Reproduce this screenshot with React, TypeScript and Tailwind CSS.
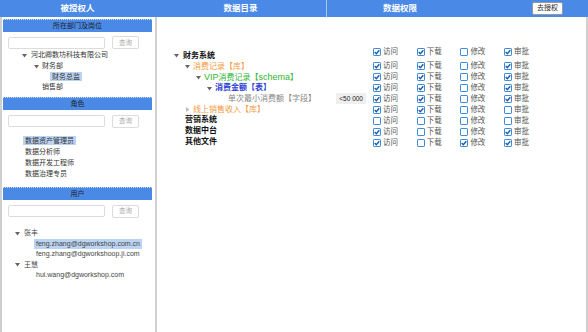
import React from "react";

const FONT = "font-['Liberation_Sans','Noto_Sans_CJK_SC',sans-serif]";

function Arrow({ open = true, light = false }: { open?: boolean; light?: boolean }) {
  return (
    <svg width="5" height="5" viewBox="0 0 10 10" className="shrink-0">
      {open ? (
        <path d="M0 2 L10 2 L5 9 Z" fill={light ? "#bbb" : "#666"} />
      ) : (
        <path d="M2 0 L9 5 L2 10 Z" fill="#bbb" />
      )}
    </svg>
  );
}

function Box({ checked }: { checked: boolean }) {
  return (
    <svg width="8" height="8" viewBox="0 0 8 8" className="shrink-0">
      <rect x="0.5" y="0.5" width="7" height="7" rx="0.6" fill="white" stroke="#3d8bd9" />
      {checked && (
        <path d="M1.7 4.1 L3.3 5.7 L6.3 2.2" fill="none" stroke="#1b5aa6" strokeWidth="1.4" />
      )}
    </svg>
  );
}

function SubHeader({ title }: { title: string }) {
  return (
    <div className="ml-[1px] mr-[3px] h-[13px] bg-[#4a89e6] border-t border-dotted border-[#c9dbf5] flex items-center justify-center text-[7px] text-[#222]">
      {title}
    </div>
  );
}

function Search({ className = "" }: { className?: string }) {
  return (
    <div className={`flex items-center gap-[7px] pl-[6px] ${className}`}>
      <div className="w-[97px] h-[12px] border border-[#dcdcdc] rounded-[2px] bg-white" />
      <div className="w-[27px] h-[13px] border border-[#dcdcdc] rounded-[2px] text-[6.5px] text-[#aaa] flex items-center justify-center">
        查询
      </div>
    </div>
  );
}

const perms: boolean[][] = [
  [true, true, false, true],
  [true, true, false, true],
  [true, true, false, true],
  [true, true, false, true],
  [true, true, false, true],
  [true, true, false, false],
  [false, false, false, false],
  [true, false, false, true],
  [true, false, true, true],
];
const permLabels = ["访问", "下载", "修改", "审批"];

export default function App() {
  return (
    <div className={`${FONT} w-[588px] h-[332px] bg-white overflow-hidden flex flex-col`}>
      {/* Header */}
      <div className="flex h-[17px] bg-[#4a89e6] text-white font-bold text-[8.5px] shrink-0">
        <div className="w-[155px] flex items-center justify-center">被授权人</div>
        <div className="w-[172px] flex items-center justify-center border-r border-[#a9c6f1]">数据目录</div>
        <div className="flex-1 flex items-center pl-[56px]">
          <span>数据权限</span>
          <div className="ml-auto mr-[25px] h-[13px] px-[4px] bg-white border border-[#999] rounded-[2px] text-[#222] font-normal text-[7px] flex items-center">
            去授权
          </div>
        </div>
      </div>

      <div className="flex flex-1">
        {/* Left panel */}
        <div className="w-[157px] border-l-2 border-r-2 border-[#cfcfcf] pt-[2px] text-[7px] text-[#333]">
          <SubHeader title="所在部门及岗位" />
          <Search className="mt-[4px]" />
          <div className="mt-[1px]">
            <div className="h-[10.7px] flex items-center pl-[20px] gap-[4px]">
              <Arrow />
              <span>河北卿数坊科技有限公司</span>
            </div>
            <div className="h-[10.7px] flex items-center pl-[32px] gap-[3px]">
              <Arrow />
              <span>财务部</span>
            </div>
            <div className="h-[10.7px] flex items-center pl-[48px]">
              <span className="bg-[#bcd4f4] px-[2px] leading-[9px]">财务总监</span>
            </div>
            <div className="h-[10.7px] flex items-center pl-[40px]">销售部</div>
          </div>

          <div className="mt-[4px]">
            <SubHeader title="角色" />
          </div>
          <Search className="mt-[5px]" />
          <div className="mt-[7.5px] pl-[21px]">
            {["数据资产管理员", "数据分析师", "数据开发工程师", "数据治理专员"].map((r, i) => (
              <div key={r} className="h-[11px] flex items-center">
                <span className={`px-[2px] leading-[9px] ${i === 0 ? "bg-[#bcd4f4]" : ""}`}>{r}</span>
              </div>
            ))}
          </div>

          <div className="mt-[7.5px]">
            <SubHeader title="用户" />
          </div>
          <Search className="mt-[5px]" />
          <div className="mt-[10px] text-[7px] text-[#444]">
            <div className="h-[10.6px] flex items-center pl-[13px] gap-[4px]">
              <Arrow />
              <span>张丰</span>
            </div>
            <div className="h-[10.6px] flex items-center pl-[32px]">
              <span className="bg-[#bcd4f4] px-[2px] leading-[10px]">feng.zhang@dgworkshop.com.cn</span>
            </div>
            <div className="h-[10.6px] flex items-center pl-[34px]">feng.zhang@dgworkshoop.ji.com</div>
            <div className="h-[10.6px] flex items-center pl-[13px] gap-[4px]">
              <Arrow />
              <span>王慧</span>
            </div>
            <div className="h-[10.6px] flex items-center pl-[34px]">hui.wang@dgworkshop.com</div>
          </div>
        </div>

        {/* Catalog + permissions */}
        <div className="flex-1 flex border-r-2 border-[#cfcfcf]">
          <div className="w-[213px] pt-[33.5px] text-[8px]">
            <div className="h-[10.75px] flex items-center pl-[17px] gap-[4px] font-bold text-[#111]">
              <Arrow />
              <span>财务系统</span>
            </div>
            <div className="h-[10.75px] flex items-center pl-[28px] gap-[3px] text-[#f39a3d]">
              <Arrow />
              <span>消费记录【库】</span>
            </div>
            <div className="h-[10.75px] flex items-center pl-[39px] gap-[3px] text-[#2fb52f]">
              <Arrow />
              <span>
                <span className="text-[9px]">VIP</span>消费记录【<span className="text-[9px]">schema</span>】
              </span>
            </div>
            <div className="h-[10.75px] flex items-center pl-[50px] gap-[3px] text-[#2b3bd8] font-semibold">
              <Arrow />
              <span>消费金额【表】</span>
            </div>
            <div className="h-[10.75px] flex items-center pl-[71px] text-[#888]">
              <span>单次最小消费额【字段】</span>
              <span className="ml-auto mr-[4px] bg-[#efefef] text-[#222] text-[6.5px] px-[3px] h-[11px] flex items-center">
                &lt;50 000
              </span>
            </div>
            <div className="h-[10.75px] flex items-center pl-[28px] gap-[3px] text-[#f39a3d]">
              <Arrow open={false} />
              <span>线上销售收入【库】</span>
            </div>
            {["营销系统", "数据中台", "其他文件"].map((t) => (
              <div key={t} className="h-[10.75px] flex items-center pl-[28px] font-bold text-[#111]">
                {t}
              </div>
            ))}
          </div>

          <div className="flex-1 pt-[29.5px] text-[7.5px] text-[#555]">
            {perms.map((row, i) => (
              <div key={i} className={`h-[11px] flex items-center pl-[3px] ${i === 0 ? "mb-[3px]" : ""}`}>
                {row.map((c, j) => (
                  <div key={j} className="w-[43.7px] flex items-center gap-[2px]">
                    <Box checked={c} />
                    <span>{permLabels[j]}</span>
                  </div>
                ))}
              </div>
            ))}
          </div>
        </div>
      </div>
    </div>
  );
}
